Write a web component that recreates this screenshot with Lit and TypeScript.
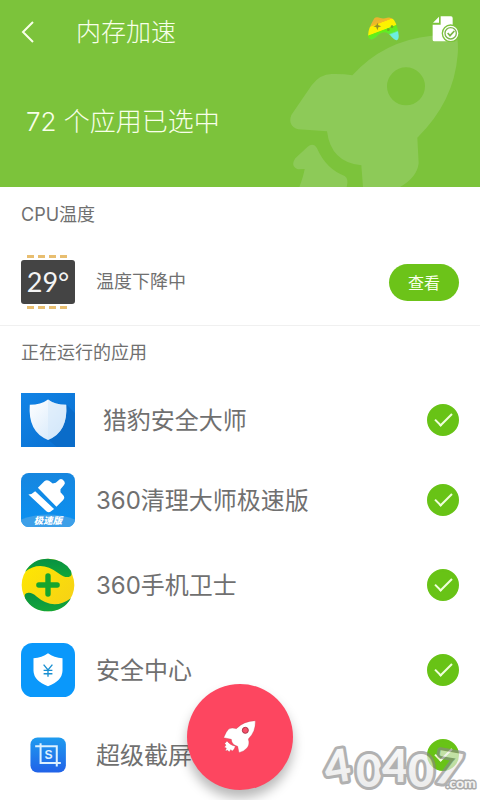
import { LitElement, html, css, svg } from "lit";
import { customElement, property, state } from "lit/decorators.js";

interface AppEntry {
  id: string;
  name: string;
}

const APPS: AppEntry[] = [
  { id: "shield", name: "\u00a0猎豹安全大师" },
  { id: "brush", name: "360清理大师极速版" },
  { id: "guard", name: "360手机卫士" },
  { id: "center", name: "安全中心" },
  { id: "capture", name: "超级截屏" },
];

const ICONS: Record<string, unknown> = {
  shield: svg`
    <defs>
      <linearGradient id="sb" x1="0" y1="0" x2="1" y2="1"><stop offset="0" stop-color="#1184e6"/><stop offset="1" stop-color="#0a6fd0"/></linearGradient>
      <linearGradient id="sw" x1="0" y1="0" x2="1" y2="1"><stop offset="0" stop-color="#fff"/><stop offset="1" stop-color="#cfe5fa"/></linearGradient>
    </defs>
    <rect width="160" height="160" fill="url(#sb)"/>
    <path d="M135 34 L160 60 V160 H106 L80 138Z" fill="#0a6cc9"/>
    <path d="M80 19 Q101 35 134 35 Q140 116 80 139 Q20 116 26 35 Q59 35 80 19Z" fill="url(#sw)"/>
    <path d="M80 19 Q101 35 134 35 Q140 116 80 139Z" fill="#d3e7fa" opacity=".5"/>`,
  brush: svg`
    <defs><linearGradient id="bb" x1="0" y1="0" x2="0" y2="1"><stop offset="0" stop-color="#1686df"/><stop offset="1" stop-color="#0a91f2"/></linearGradient></defs>
    <clipPath id="bc"><rect width="160" height="160" rx="23"/></clipPath>
    <g clip-path="url(#bc)">
      <rect width="160" height="160" fill="url(#bb)"/>
      <path d="M0 138 Q80 108 160 138 V160 H0Z" fill="#3d9fe8"/>
      <g fill="#fff">
        <path d="M50 44 L70 24 Q76 19 83 23 L94 31 L103 29 L114 19 Q119 16 124 20 L129 26 Q132 31 127 36 L117 48 L117 57 L127 68 Q131 75 125 80 L105 100Z"/>
        <path d="M42 54 L98 107 L87 115 Q81 118 75 113 L22 64 Q33 63 42 54Z"/>
      </g>
      <text x="80" y="151" text-anchor="middle" class="tag">极速版</text>
    </g>`,
  guard: svg`
    <defs>
      <linearGradient id="gy" x1="0" y1="0" x2="1" y2="1"><stop offset="0" stop-color="#ffe900"/><stop offset="1" stop-color="#f5cf18"/></linearGradient>
      <linearGradient id="gg" x1="0" y1="0" x2="0" y2="1"><stop offset="0" stop-color="#079143"/><stop offset="1" stop-color="#13a638"/></linearGradient>
    </defs>
    <circle cx="80" cy="80" r="78" fill="url(#gy)"/>
    <path d="M12 41 Q34 2 80 2 Q128 4 148 38 Q154 54 141 56 Q130 59 111 45 Q57 4 12 41Z" fill="url(#gg)"/>
    <path d="M12 119 Q7 104 22 103 Q33 102 46 114 Q96 157 148 119 Q126 158 80 158 Q33 157 12 119Z" fill="url(#gg)"/>
    <path d="M80 53 V107 M53 80 H107" stroke="#16a52d" stroke-width="16" stroke-linecap="round"/>`,
  center: svg`
    <rect width="160" height="160" rx="34" fill="#0a98fb"/>
    <path d="M80 30 Q98 43 123 45 V82 Q122 112 80 128 Q38 112 37 82 V45 Q62 43 80 30Z" fill="#fff"/>
    <path d="M67 64 L80 80 L93 64 M80 80 V100 M67 81 H93 M67 91 H93" fill="none" stroke="#198fd1" stroke-width="4"/>`,
  capture: svg`
    <defs><linearGradient id="cb" x1="0" y1="0" x2="0" y2="1"><stop offset="0" stop-color="#1e9bef"/><stop offset="1" stop-color="#2162e8"/></linearGradient></defs>
    <rect x="28" y="28" width="105" height="104" rx="21" fill="url(#cb)"/>
    <path d="M42 54 H106 V114 M58 45 V104 H118" fill="none" stroke="#dcf1ff" stroke-width="6"/>
    <text x="82" y="92" text-anchor="middle" class="letter">S</text>`,
};

@customElement("app-icon")
export class AppIcon extends LitElement {
  @property() name = "";

  static styles = css`
    :host { display: block; width: 54px; height: 54px; }
    svg { display: block; width: 100%; height: 100%; }
    .tag { font: italic 900 28px "Noto Sans CJK SC", sans-serif; fill: #fff; }
    .letter { font: 700 36px "Liberation Sans", sans-serif; fill: #dcf1ff; }
  `;

  render() {
    return html`<svg viewBox="0 0 160 160" aria-hidden="true">${ICONS[this.name]}</svg>`;
  }
}

@customElement("app-root")
export class AppRoot extends LitElement {
  @state() private selected = new Set(APPS.map((a) => a.id));

  static styles = css`
    :host {
      display: block;
      position: relative;
      min-height: 100vh;
      overflow: hidden;
      background: #fff;
      color: #707070;
      font-family: Inter, "Noto Sans CJK SC", sans-serif;
      font-weight: 400;
    }
    button { border: 0; padding: 0; background: none; font: inherit; color: inherit; cursor: pointer; }
    svg { display: block; }
    h1, h2, p, ul { margin: 0; padding: 0; font-weight: inherit; }
    .header {
      position: relative;
      box-sizing: border-box;
      padding: 0 21px 47px;
      background: #7cc33b;
      color: #f8ffe9;
      font-weight: 300;
    }
    .backdrop { position: absolute; right: 0; bottom: 0; width: 210px; height: 187px; }
    .bar { position: relative; display: flex; align-items: center; height: 64px; }
    .title { flex: 1; margin-left: 41px; font-size: 25px; line-height: 36px; }
    .tools { display: flex; align-items: center; gap: 32px; padding-bottom: 6px; }
    .summary { position: relative; margin-top: 40px; padding-left: 5px; font-size: 26px; line-height: 36px; }
    .cpu { padding: 16px 21px 0; border-bottom: 1px solid #f0f0f0; }
    .running { padding: 15px 21px 0; }
    .heading { font-size: 18px; line-height: 24px; }
    .temp { display: flex; align-items: center; gap: 21px; height: 86px; margin-top: 12px; }
    .chip { display: flex; flex-direction: column; align-items: center; gap: 2px; width: 54px; }
    .pins {
      width: 42px;
      height: 3px;
      background: repeating-linear-gradient(90deg, #e8be70 0 7px, transparent 7px 11px);
    }
    .die {
      width: 100%;
      border-radius: 3px;
      background: #444;
      color: #f4f4f4;
      font-family: Lato, sans-serif;
      font-size: 27px;
      font-weight: 400;
      line-height: 44px;
      text-align: center;
    }
    .status { flex: 1; font-size: 18px; line-height: 24px; }
    .view {
      width: 70px;
      height: 37px;
      border-radius: 19px;
      background: #6cc319;
      color: #f8ffe9;
      font-size: 16px;
      font-weight: 400;
    }
    .list { margin-top: 17px; list-style: none; }
    .row { display: flex; align-items: center; gap: 21px; height: 85px; }
    .item:first-child .row { height: 75px; }
    .name { flex: 1; padding-top: 2px; font-size: 24px; line-height: 36px; }
    .check {
      appearance: none;
      display: grid;
      place-items: center;
      box-sizing: border-box;
      width: 32px;
      height: 32px;
      margin: 0;
      border: 2px solid #68c316;
      border-radius: 50%;
    }
    .check:checked { background: #68c316; }
    .check:checked::before {
      content: "";
      width: 15px;
      height: 7px;
      margin-bottom: 5px;
      border: solid #f0ffdc;
      border-width: 0 0 2px 2px;
      transform: rotate(-45deg);
    }
    .boost {
      position: absolute;
      left: 50%;
      bottom: 10px;
      display: grid;
      place-items: center;
      width: 106px;
      height: 106px;
      margin-left: -53px;
      border-radius: 50%;
      background: #fd4660;
      box-shadow: 0 8px 12px rgba(0, 0, 0, 0.28);
    }
    .mark { position: absolute; right: 0; bottom: 0; pointer-events: none; }
    .mark-digit { font: 900 45px Lato, sans-serif; }
    .mark-small { font: 900 14px Lato, sans-serif; }
  `;

  private toggle(id: string) {
    const next = new Set(this.selected);
    if (!next.delete(id)) next.add(id);
    this.selected = next;
  }

  render() {
    return html`
      <header class="header">
        <svg class="backdrop" viewBox="0 0 630 561" fill="#8dca58" aria-hidden="true">
          <path fill-rule="evenodd" d="M247 226 Q340 122 485 107 Q530 100 560 107 Q566 130 563 165 Q552 305 442 413 L446 490 Q441 533 390 561 H279 L274 496 Q183 488 171 394 L85 388 Q52 378 64 345 L125 256 Q150 222 185 222 Q220 221 247 226Z M408 202 A57 57 0 1 0 408 316 A57 57 0 1 0 408 202Z"/>
          <path d="M113 440 Q130 427 141 445 Q168 507 224 528 Q237 536 230 561 H88 Q100 530 104 507 L84 508 Q60 499 76 475Z"/>
        </svg>
        <div class="bar">
          <button aria-label="返回">
            <svg width="14" height="22" viewBox="0 0 14 22"><path d="M12 1 L2 11 L12 21" fill="none" stroke="#f8ffe9" stroke-width="2"/></svg>
          </button>
          <h1 class="title">内存加速</h1>
          <div class="tools">
            <button aria-label="游戏">
              <svg width="33" height="26" viewBox="0 0 99 78">
                <defs><linearGradient id="pad" x1="0.25" y1="0" x2="0.75" y2="1">
                  <stop offset="0.12" stop-color="#e9b330"/><stop offset="0.25" stop-color="#f2bb23"/>
                  <stop offset="0.27" stop-color="#fff000"/><stop offset="0.52" stop-color="#f8f500"/>
                  <stop offset="0.55" stop-color="#65ed13"/><stop offset="0.74" stop-color="#5cec36"/>
                  <stop offset="0.8" stop-color="#6deee0"/>
                </linearGradient></defs>
                <path d="M22 7 Q28 1 40 6 Q50 9 60 5 Q74 2 81 12 Q92 29 95 58 Q96 72 88 73 Q81 72 69 57 Q61 48 51 49 Q38 50 27 64 Q12 76 5 65 Q-2 48 22 7Z" fill="url(#pad)"/>
                <path d="M31 20 L34 28 L43 31 L34 34 L31 43 L28 34 L19 31 L28 28Z" fill="#93902a"/>
                <circle cx="64" cy="41" r="4" fill="#6bae24"/><circle cx="75" cy="32" r="4" fill="#6bae24"/>
              </svg>
            </button>
            <button aria-label="报告">
              <svg width="27" height="26" viewBox="0 0 81 78">
                <path d="M26 1 H57 Q62 1 62 6 V76 H7 Q2 76 2 71 V26 H26Z M21 2 V20 H3Z" fill="#fff"/>
                <circle cx="56" cy="52" r="25" fill="#fff" stroke="#7cc33b" stroke-width="4"/>
                <circle cx="56" cy="52" r="17" fill="none" stroke="#7cb648" stroke-width="4"/>
                <path d="M47 51 L54 59 L67 45" fill="none" stroke="#7cb648" stroke-width="5"/>
              </svg>
            </button>
          </div>
        </div>
        <p class="summary">72 个应用已选中</p>
      </header>

      <section class="cpu">
        <h2 class="heading">CPU温度</h2>
        <div class="temp">
          <div class="chip">
            <div class="pins"></div>
            <div class="die">29°</div>
            <div class="pins"></div>
          </div>
          <span class="status">温度下降中</span>
          <button class="view">查看</button>
        </div>
      </section>

      <section class="running">
        <h2 class="heading">正在运行的应用</h2>
        <ul class="list">
          ${APPS.map(
            (app) => html`<li class="item">
              <label class="row">
                <app-icon name=${app.id}></app-icon>
                <span class="name">${app.name}</span>
                <input class="check" type="checkbox" .checked=${this.selected.has(app.id)} @change=${() => this.toggle(app.id)} />
              </label>
            </li>`
          )}
        </ul>
      </section>

      <button class="boost" aria-label="加速">
        <svg width="36" height="36" viewBox="188 180 108 108" fill="#fff" stroke="#c23a4e" stroke-width="1">
          <path fill-rule="evenodd" d="M288 185 Q290 217 267 240 Q272 257 263 267 Q255 277 239 281 L235 262 Q217 258 216 241 L193 236 Q200 218 208 210 Q217 205 231 209 Q253 186 288 185Z"/>
          <circle cx="258" cy="214" r="9" fill="#f5506a" stroke="#ad3147" stroke-width="3"/>
          <path d="M203 246 Q211 258 228 262 Q226 271 219 276 L214 272 L210 279 L205 274 L198 276 L201 267 L195 265 L200 258 L196 254Z"/>
        </svg>
      </button>

      <svg class="mark" width="160" height="64" viewBox="0 0 160 64" aria-hidden="true">
        <defs><linearGradient id="mk" x1="0" y1="0" x2="0" y2="1"><stop offset="0" stop-color="#fafafa"/><stop offset="1" stop-color="#ddd"/></linearGradient></defs>
        <g fill="url(#mk)" stroke="#888" stroke-width="6" stroke-linejoin="round" paint-order="stroke" opacity=".65">
          <text class="mark-digit" x="7 36 62 88 113" y="48 51 46 51 46" rotate="-9 0 0 0 10">40407</text>
        </g>
        <text class="mark-small" x="126" y="52" fill="#f2f2f2" stroke="#aaa" stroke-width="3" stroke-linejoin="round" paint-order="stroke">.com</text>
      </svg>
    `;
  }
}
